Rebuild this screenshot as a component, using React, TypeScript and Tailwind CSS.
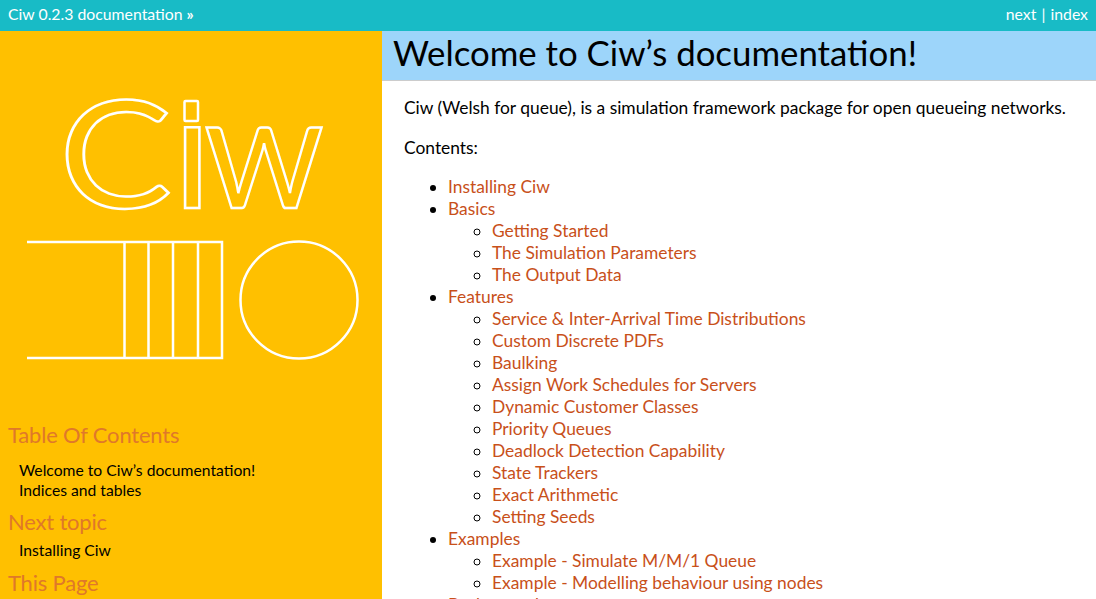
const link = "text-[#c8501a]";
const L = ({ children }: { children: string }) => <li className="list-[circle]"><a className={link}>{children}</a></li>;
const Top = ({ title, items }: { title: string; items?: string[] }) => (
  <li className="list-disc">
    <a className={link}>{title}</a>
    {items && <ul className="pl-11">{items.map((i) => <L key={i}>{i}</L>)}</ul>}
  </li>
);
const H = ({ children, cls }: { children: string; cls: string }) => (
  <h3 className={`text-[22px] tracking-[-0.2px] leading-[30px] text-[#e0782a] ${cls}`}>{children}</h3>
);
export default function App() {
  return (
    <div className="h-[599px] w-[1096px] overflow-hidden flex flex-col bg-white text-black font-['Lato','Open_Sans',sans-serif]">
      <header className="h-[31px] shrink-0 bg-[#18bbc6] text-white text-[15.800px] flex items-center justify-between pl-2 pr-2 pb-[3px]">
        <span>Ciw 0.2.3 documentation <span className="font-bold">»</span></span>
        <span>next <span className="mx-[1px]">|</span> index</span>
      </header>
      <div className="flex flex-1 min-h-0">
        <aside className="w-[382px] shrink-0 bg-[#ffc000] pl-2">
          <svg width="374" height="373" viewBox="8 31 374 373" className="block" fill="none" stroke="#fff" strokeWidth="2.500">
            <text x="59" y="208" fontSize="150" fontFamily="Lato" textLength="113" lengthAdjust="spacingAndGlyphs">C</text>
            <text x="173" y="208" fontSize="160" fontFamily="Lato">ı</text>
            <rect x="184.500" y="101" width="13.500" height="20" rx="1" />
            <text x="204" y="208" fontSize="160" fontFamily="Lato" textLength="120" lengthAdjust="spacingAndGlyphs">w</text>
            <path d="M27 242H222V358H27M124.500 242V358M148.500 242V358M173 242V358M198 242V358" />
            <circle cx="299" cy="300" r="58.500" />
          </svg>
          <H cls="mt-[16px]">Table Of Contents</H>
          <div className="text-[15.700px] leading-[19.500px] pl-[11px] mt-[11px]">
            <div>Welcome to Ciw’s documentation!</div>
            <div>Indices and tables</div>
          </div>
          <H cls="mt-[7px]">Next topic</H>
          <div className="text-[15.700px] leading-[19.500px] pl-[11px] mt-[4px]">Installing Ciw</div>
          <H cls="mt-[7px]">This Page</H>
        </aside>
        <main className="flex-1 min-w-0">
          <h1 className="h-[50px] bg-[#9dd5fa] border-b border-[#cccccc] pl-[11px] text-[34.800px] leading-[44px]">Welcome to Ciw’s documentation!</h1>
          <div className="pl-[22px] text-[17.400px] leading-[22px]">
            <p className="mt-[16px]">Ciw (Welsh for queue), is a simulation framework package for open queueing networks.</p>
            <p className="mt-[18px]">Contents:</p>
            <ul className="pl-11 mt-[17px]">
              <Top title="Installing Ciw" />
              <Top title="Basics" items={["Getting Started", "The Simulation Parameters", "The Output Data"]} />
              <Top title="Features" items={["Service & Inter-Arrival Time Distributions", "Custom Discrete PDFs", "Baulking", "Assign Work Schedules for Servers", "Dynamic Customer Classes", "Priority Queues", "Deadlock Detection Capability", "State Trackers", "Exact Arithmetic", "Setting Seeds"]} />
              <Top title="Examples" items={["Example - Simulate M/M/1 Queue", "Example - Modelling behaviour using nodes"]} />
              <Top title="Background" />
            </ul>
          </div>
        </main>
      </div>
    </div>
  );
}
